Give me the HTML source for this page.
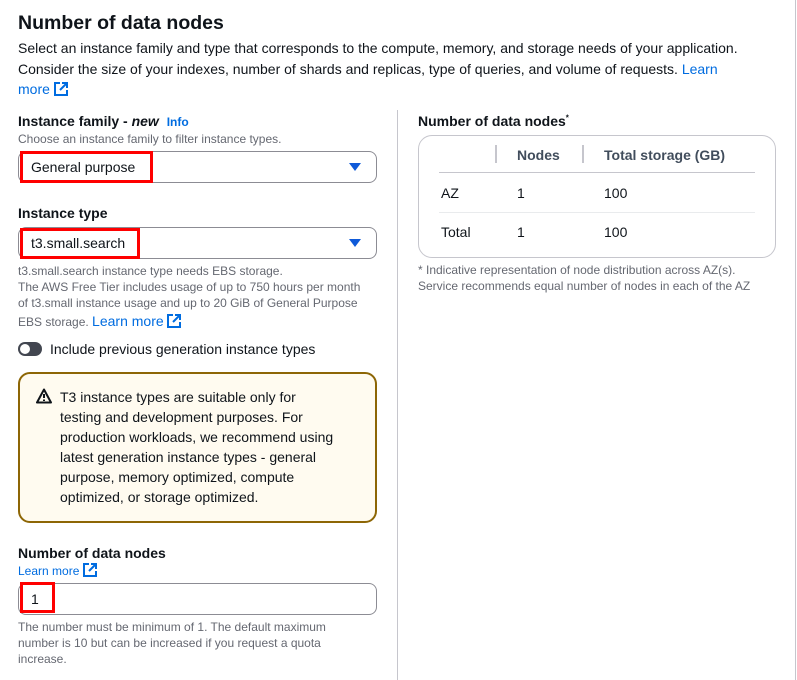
<!DOCTYPE html>
<html style="width:797px;height:680px;overflow:hidden"><head><style>
*{margin:0;padding:0;box-sizing:border-box}
body{width:797px;height:680px;overflow:hidden;background:#fff;font-family:"Liberation Sans",Arial,sans-serif;color:#0f141a;position:relative}
.a{position:absolute;white-space:nowrap}
.card{position:absolute;left:-20px;top:-16px;width:816px;height:700px;border:1px solid #c6c6cd;border-bottom:none;border-radius:16px 16px 0 0}
.h1{font-size:19.5px;font-weight:700}
.p{font-size:14px;line-height:20px}
.lnk{color:#006ce0}
.lbl{font-size:14px;font-weight:700}
.small{font-size:12px;line-height:16px;color:#656871}
.sel{position:absolute;left:18px;width:359px;height:32px;border:1px solid #8c8c94;border-radius:8px}
.tri{position:absolute;right:15px;top:11px;width:0;height:0;border-left:6px solid transparent;border-right:6px solid transparent;border-top:8px solid #0f5ad9}
.red{position:absolute;border:3px solid #f00}
.ext{display:inline-block;vertical-align:-2px}
</style></head><body>
<div class="card"></div>
<div class="a h1" style="left:18px;top:12px">Number of data nodes</div>
<div class="a p" style="left:18px;top:38px;color:#0f141a">Select an instance family and type that corresponds to the compute, memory, and storage needs of your application.</div>
<div class="a p" style="left:18px;top:59px">Consider the size of your indexes, number of shards and replicas, type of queries, and volume of requests. <span class="lnk">Learn</span></div>
<div class="a p lnk" style="left:18px;top:79px">more <svg class="ext" width="14" height="14" viewBox="0 0 14 14" fill="none" stroke="#006ce0" stroke-width="2"><path d="M6 1H1v12h12V8M8 1h5v5M13 1L6 8"/></svg></div>

<div class="a lbl" style="left:18px;top:113px">Instance family - <i>new</i> <span style="color:#006ce0;font-size:12px;margin-left:4px">Info</span></div>
<div class="a small" style="left:18px;top:131px">Choose an instance family to filter instance types.</div>
<div class="sel" style="top:151px"><div class="tri"></div></div>
<div class="red" style="left:20px;top:151px;width:133px;height:32px"></div>
<div class="a p" style="left:31px;top:157px">General purpose</div>

<div class="a lbl" style="left:18px;top:205px">Instance type</div>
<div class="sel" style="top:227px"><div class="tri"></div></div>
<div class="red" style="left:20px;top:228px;width:120px;height:31px"></div>
<div class="a p" style="left:31px;top:233px">t3.small.search</div>

<div class="a small" style="left:18px;top:263px">t3.small.search instance type needs EBS storage.</div>
<div class="a small" style="left:18px;top:279px">The AWS Free Tier includes usage of up to 750 hours per month</div>
<div class="a small" style="left:18px;top:295px">of t3.small instance usage and up to 20 GiB of General Purpose</div>
<div class="a small" style="left:18px;top:313px">EBS storage. <span class="lnk" style="font-size:14px">Learn more</span> <svg class="ext" width="14" height="14" viewBox="0 0 14 14" fill="none" stroke="#006ce0" stroke-width="2"><path d="M6 1H1v12h12V8M8 1h5v5M13 1L6 8"/></svg></div>

<div class="a" style="left:18px;top:342px;width:24px;height:14px;border-radius:7px;background:#424650"><div style="position:absolute;left:2px;top:2px;width:10px;height:10px;border-radius:5px;background:#fff"></div></div>
<div class="a p" style="left:50px;top:339px">Include previous generation instance types</div>

<div class="a" style="left:18px;top:372px;width:359px;height:151px;border:2px solid #8d6605;border-radius:12px;background:#fffbf0"></div>
<svg class="a" style="left:36px;top:388px" width="16" height="16" viewBox="0 0 16 16" fill="none" stroke="#0f141a" stroke-width="2"><path d="M8 1.5L1 14.5h14z" stroke-linejoin="round"/><path d="M8 6v4M8 11.5v1.5"/></svg>
<div class="a p" style="left:60px;top:387px;line-height:20px">T3 instance types are suitable only for<br>testing and development purposes. For<br>production workloads, we recommend using<br>latest generation instance types - general<br>purpose, memory optimized, compute<br>optimized, or storage optimized.</div>

<div class="a lbl" style="left:18px;top:545px">Number of data nodes</div>
<div class="a small lnk" style="left:18px;top:563px;color:#006ce0">Learn more <svg class="ext" width="14" height="14" viewBox="0 0 14 14" fill="none" stroke="#006ce0" stroke-width="2"><path d="M6 1H1v12h12V8M8 1h5v5M13 1L6 8"/></svg></div>
<div class="sel" style="top:583px"></div>
<div class="red" style="left:20px;top:582px;width:35px;height:31px"></div>
<div class="a p" style="left:31px;top:589px">1</div>
<div class="a small" style="left:18px;top:619px;line-height:16px">The number must be minimum of 1. The default maximum<br>number is 10 but can be increased if you request a quota<br>increase.</div>

<div class="a" style="left:397px;top:110px;width:1px;height:570px;background:#c6c6cd"></div>

<div class="a lbl" style="left:418px;top:113px">Number of data nodes<sup style="font-size:8px">*</sup></div>
<div class="a" style="left:418px;top:135px;width:358px;height:123px;border:1px solid #c6c6cd;border-radius:14px"></div>
<div class="a" style="left:495px;top:145px;width:2px;height:18px;background:#c6c6cd"></div>
<div class="a" style="left:582px;top:145px;width:2px;height:18px;background:#c6c6cd"></div>
<div class="a lbl" style="left:517px;top:147px;color:#414d5c">Nodes</div>
<div class="a lbl" style="left:604px;top:147px;color:#414d5c">Total storage (GB)</div>
<div class="a" style="left:439px;top:172px;width:316px;height:1px;background:#c6c6cd"></div>
<div class="a p" style="left:441px;top:183px">AZ</div>
<div class="a p" style="left:517px;top:183px">1</div>
<div class="a p" style="left:604px;top:183px">100</div>
<div class="a" style="left:439px;top:212px;width:316px;height:1px;background:#e9ebed"></div>
<div class="a p" style="left:441px;top:222px">Total</div>
<div class="a p" style="left:517px;top:222px">1</div>
<div class="a p" style="left:604px;top:222px">100</div>
<div class="a small" style="left:418px;top:262px">* Indicative representation of node distribution across AZ(s).<br>Service recommends equal number of nodes in each of the AZ</div>
</body></html>
